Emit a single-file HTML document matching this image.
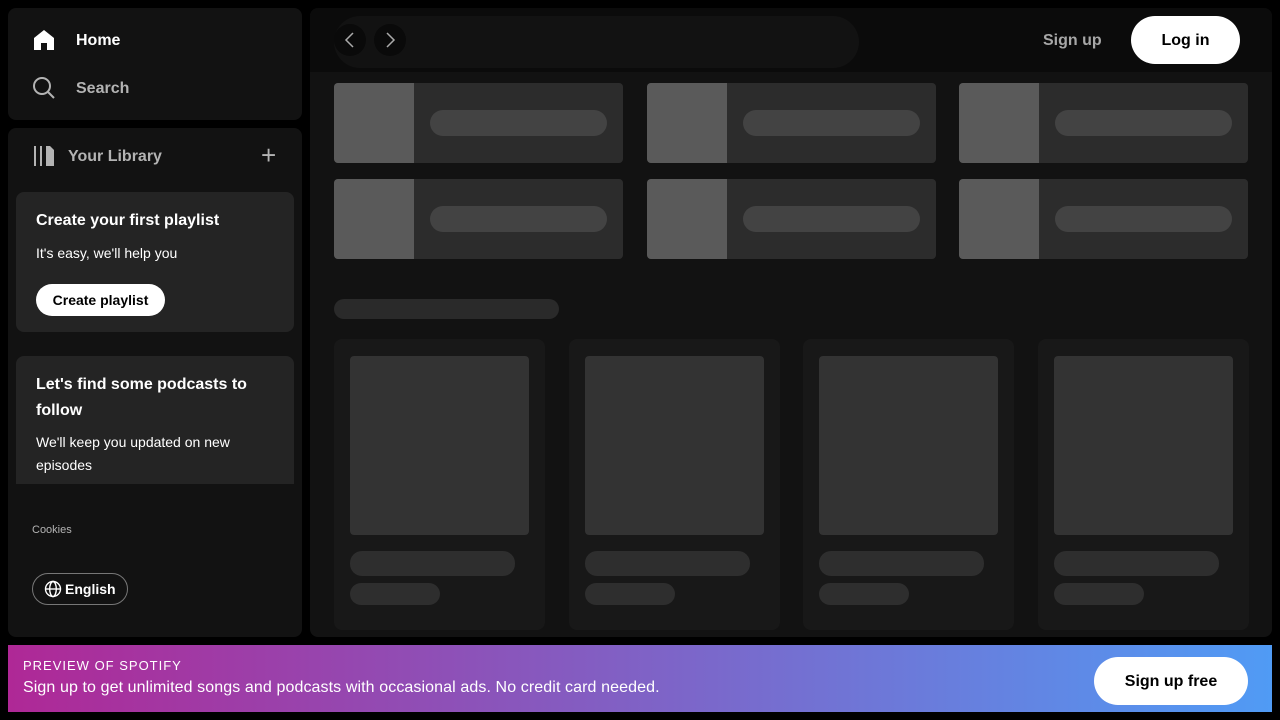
<!DOCTYPE html>
<html><head><meta charset="utf-8"><style>
*{box-sizing:border-box;margin:0;padding:0}
body{width:1280px;height:720px;background:#000;font-family:"Liberation Sans",sans-serif;position:relative;overflow:hidden;color:#fff}
.a{position:absolute}
.p{border-radius:8px;background:#121212}
.b{font-weight:700}
.tile{position:absolute;width:289px;height:80px;background:#2c2c2c;border-radius:4px;overflow:hidden}
.tile i{position:absolute;left:0;top:0;width:80px;height:80px;background:#5a5a5a}
.tile s{position:absolute;left:96px;top:27px;width:177px;height:26px;border-radius:13px;background:#434343}
.card{position:absolute;top:339px;width:211px;height:291px;background:#181818;border-radius:8px}
.card i{position:absolute;left:16px;top:17px;width:179px;height:179px;background:#333;border-radius:4px}
.card s{position:absolute;left:16px;border-radius:12px;background:#2e2e2e}
</style></head><body>
<div class="a p" style="left:8px;top:8px;width:294px;height:112px"></div>
<svg class="a" style="left:32px;top:28px" width="24" height="24" viewBox="0 0 24 24"><path d="M12 2L2 10v12h7v-7h6v7h7V10z" fill="#fff"/></svg>
<div class="a b" style="left:76px;top:32px;font-size:16px">Home</div>
<svg class="a" style="left:32px;top:76px" width="24" height="24" viewBox="0 0 24 24" fill="none" stroke="#b3b3b3" stroke-width="2"><circle cx="10" cy="10" r="8"/><path d="M16 16l6 6"/></svg>
<div class="a b" style="left:76px;top:80px;font-size:16px;color:#b3b3b3">Search</div>
<div class="a p" style="left:8px;top:128px;width:294px;height:509px"></div>
<svg class="a" style="left:33px;top:145px" width="22" height="22" viewBox="0 0 22 22" fill="#b3b3b3"><rect x="1" y="1" width="2" height="20"/><rect x="7" y="1" width="2" height="20"/><path d="M13 1h4l4 4v16h-8z"/></svg>
<div class="a b" style="left:68px;top:148px;font-size:16px;color:#b3b3b3">Your Library</div>
<div class="a" style="left:261px;top:140px;font-size:26px;color:#b3b3b3;font-weight:300">+</div>
<div class="a" style="left:16px;top:192px;width:278px;height:140px;background:#242424;border-radius:8px"></div>
<div class="a b" style="left:36px;top:212px;font-size:16px">Create your first playlist</div>
<div class="a" style="left:36px;top:245px;font-size:14px">It's easy, we'll help you</div>
<div class="a b" style="left:36px;top:284px;width:129px;height:32px;background:#fff;color:#000;border-radius:16px;font-size:14px;text-align:center;line-height:32px">Create playlist</div>
<div class="a" style="left:16px;top:356px;width:278px;height:128px;background:#242424;border-radius:8px 8px 0 0"></div>
<div class="a b" style="left:36px;top:372px;width:240px;font-size:16px;line-height:26px">Let's find some podcasts to follow</div>
<div class="a" style="left:36px;top:431px;width:240px;font-size:14px;line-height:23px">We'll keep you updated on new episodes</div>
<div class="a" style="left:32px;top:524px;font-size:11px;color:#b3b3b3">Cookies</div>
<div class="a b" style="left:32px;top:573px;width:96px;height:32px;border:1px solid #777;border-radius:16px;font-size:14px;line-height:30px;padding-left:32px">English</div>
<svg class="a" style="left:44px;top:580px" width="18" height="18" viewBox="0 0 18 18" fill="none" stroke="#fff" stroke-width="1.4"><circle cx="9" cy="9" r="7.5"/><ellipse cx="9" cy="9" rx="3.3" ry="7.5"/><path d="M1.5 9h15"/></svg>

<div class="a p" style="left:310px;top:8px;width:962px;height:629px;background:#121212;overflow:hidden">
<div class="a" style="left:0;top:0;width:962px;height:64px;background:#0b0b0b"></div>
</div>
<div class="a" style="left:334px;top:16px;width:525px;height:52px;border-radius:26px;background:#121212"></div>
<div class="a" style="left:334px;top:24px;width:32px;height:32px;border-radius:16px;background:#0a0a0a"></div>
<div class="a" style="left:374px;top:24px;width:32px;height:32px;border-radius:16px;background:#0a0a0a"></div>
<svg class="a" style="left:342px;top:32px" width="16" height="16" viewBox="0 0 16 16" fill="none" stroke="#aaa" stroke-width="1.5"><path d="M11 1L4 8l7 7"/></svg>
<svg class="a" style="left:382px;top:32px" width="16" height="16" viewBox="0 0 16 16" fill="none" stroke="#aaa" stroke-width="1.5"><path d="M5 1l7 7-7 7"/></svg>
<div class="a b" style="left:1043px;top:32px;font-size:16px;color:#a7a7a7">Sign up</div>
<div class="a b" style="left:1131px;top:16px;width:109px;height:48px;background:#fff;color:#000;border-radius:24px;font-size:16px;text-align:center;line-height:50px">Log in</div>

<div class="tile" style="left:334px;top:83px"><i></i><s></s></div>
<div class="tile" style="left:647px;top:83px"><i></i><s></s></div>
<div class="tile" style="left:959px;top:83px"><i></i><s></s></div>
<div class="tile" style="left:334px;top:179px"><i></i><s></s></div>
<div class="tile" style="left:647px;top:179px"><i></i><s></s></div>
<div class="tile" style="left:959px;top:179px"><i></i><s></s></div>
<div class="a" style="left:334px;top:299px;width:225px;height:20px;border-radius:10px;background:#2a2a2a"></div>
<div class="card" style="left:334px"><i></i><s style="top:212px;width:165px;height:25px"></s><s style="top:244px;width:90px;height:22px"></s></div>
<div class="card" style="left:569px"><i></i><s style="top:212px;width:165px;height:25px"></s><s style="top:244px;width:90px;height:22px"></s></div>
<div class="card" style="left:803px"><i></i><s style="top:212px;width:165px;height:25px"></s><s style="top:244px;width:90px;height:22px"></s></div>
<div class="card" style="left:1038px"><i></i><s style="top:212px;width:165px;height:25px"></s><s style="top:244px;width:90px;height:22px"></s></div>

<div class="a" style="left:8px;top:645px;width:1264px;height:67px;background:linear-gradient(90deg,#af2896,#509bf5)"></div>
<div class="a" style="left:23px;top:658px;font-size:13px;letter-spacing:1px">PREVIEW OF SPOTIFY</div>
<div class="a" style="left:23px;top:679px;font-size:16px;letter-spacing:0.1px">Sign up to get unlimited songs and podcasts with occasional ads. No credit card needed.</div>
<div class="a b" style="left:1094px;top:657px;width:154px;height:48px;background:#fff;color:#000;border-radius:24px;font-size:16px;text-align:center;line-height:50px">Sign up free</div>
</body></html>
